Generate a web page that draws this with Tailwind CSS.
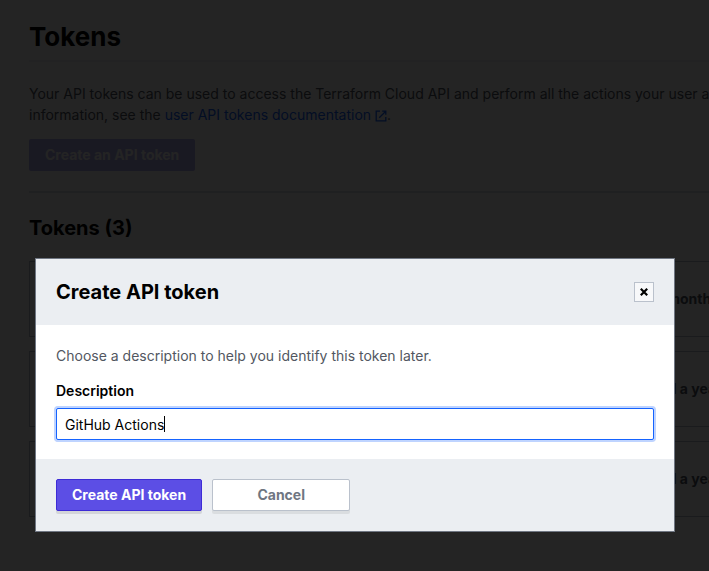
<!DOCTYPE html>
<html lang="en">
<head>
<meta charset="utf-8">
<meta name="viewport" content="width=device-width, initial-scale=1">
<title>Tokens</title>
<script src="https://cdn.jsdelivr.net/npm/@tailwindcss/browser@4"></script>
</head>
<body class="min-h-screen overflow-hidden bg-white font-['Inter','Liberation_Sans',sans-serif] text-sm text-black">
<main class="overflow-hidden pt-[17px] pl-[29px]">
  <h1 class="border-b-2 border-[#eef0f3] pb-[3px] text-[26px] leading-10 font-bold">Tokens</h1>
  <p class="mt-[21px] leading-[21px] whitespace-nowrap text-[#525761]">Your API tokens can be used to access the Terraform Cloud API and perform all the actions your user account is entitled to. For more<br>information, see the <a href="#docs" class="text-[#1563ff]">user API tokens documentation
    <svg class="inline size-3 align-[-2px]" viewBox="0 0 12 12" fill="none" stroke="currentColor" stroke-width="1.3" aria-hidden="true"><path d="M5 1.2H1.2v9.6h9.6V7M7.2 1.2h3.6v3.6M10.8 1.2 4.2 7.8"/></svg></a>.</p>
  <button type="button" class="mt-[14px] block h-8 rounded-xs bg-[#b2adf0] px-4 font-bold text-white">Create an API token</button>
  <section class="mt-5 border-t-2 border-[#dce0e6] pt-[19px]">
    <h2 class="text-xl leading-8 font-bold">Tokens (3)</h2>
    <ul class="mt-[17px] -mr-12 flex flex-col gap-[14px] font-bold whitespace-nowrap text-[#525761]">
      <li class="flex h-[76px] items-center justify-end border border-[#bac1cc]"><span class="w-[158px]">Created a month ago</span></li>
      <li class="flex h-[76px] items-center justify-end border border-[#bac1cc]"><span class="w-[134px]">Created a year ago</span></li>
      <li class="flex h-[76px] items-center justify-end border border-[#bac1cc]"><span class="w-[134px]">Created a year ago</span></li>
    </ul>
  </section>
</main>
<div class="fixed inset-0 bg-black/86 pt-[258px] pr-[34px] pl-[35px]">
  <form role="dialog" aria-modal="true" aria-labelledby="dialog-title" class="border border-[#6f7682] bg-white">
    <header class="flex items-center justify-between bg-[#ebeef2] px-5 py-[17px]">
      <h2 id="dialog-title" class="text-xl leading-8 font-bold">Create API token</h2>
      <button type="button" aria-label="Close" class="flex size-5 items-center justify-center border border-[#bac1cc] bg-[#f7f8fa]">
        <svg class="size-2" viewBox="0 0 8 8" fill="none" stroke="currentColor" stroke-width="2.2" aria-hidden="true"><path d="m.8.8 6.4 6.4M7.2.8.8 7.2"/></svg>
      </button>
    </header>
    <div class="px-5 pt-5 pb-[19px]">
      <p class="leading-[21px] text-[#525761]">Choose a description to help you identify this token later.</p>
      <label for="description" class="mt-[14px] block leading-[21px] font-semibold">Description</label>
      <div class="relative mt-[7px]">
        <input id="description" type="text" value="GitHub Actions" class="block h-8 w-full rounded-xs border border-[#1563ff] bg-white px-2 ring-2 ring-[#bfd4ff] outline-none">
        <span class="absolute top-2 left-[108px] h-4 w-px bg-black" aria-hidden="true"></span>
      </div>
    </div>
    <footer class="flex gap-[10px] bg-[#ebeef2] p-5">
      <button type="submit" class="h-8 rounded-xs border border-[#3d2bd6] bg-[#5c4ee5] px-[15px] font-bold text-white shadow-[0_3px_0_#0000001a]">Create API token</button>
      <button type="button" class="h-8 w-[138px] rounded-xs border border-[#bac1cc] bg-white font-bold text-[#6f7682] shadow-[0_3px_0_#00000012]">Cancel</button>
    </footer>
  </form>
</div>
</body>
</html>
